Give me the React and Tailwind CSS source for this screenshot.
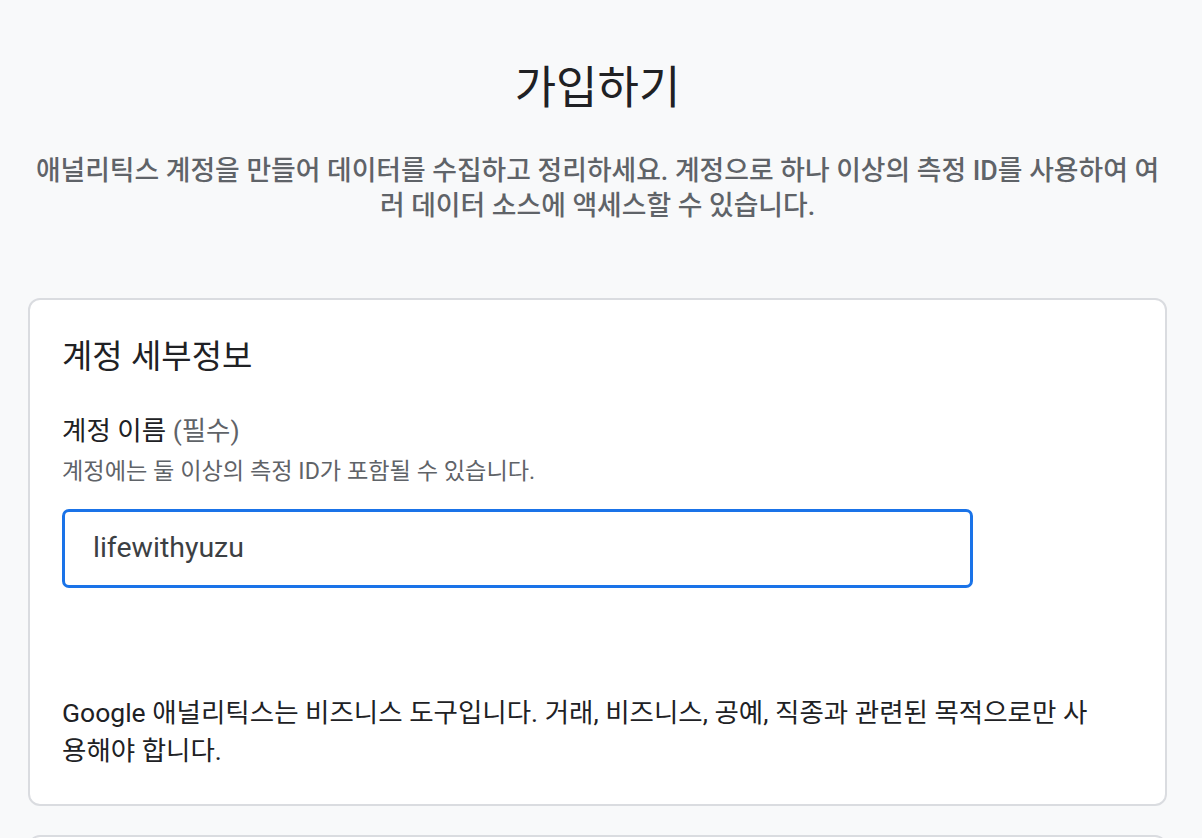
export default function App() {
  return (
    <div className="min-h-[838px] bg-[#f8f9fa] overflow-hidden" style={{ fontFamily: 'Roboto, "Noto Sans CJK KR", sans-serif' }}>
      <div className="pl-[28px] pt-[61px] w-[1167px]">
        <h1 className="text-center text-[45px] leading-[56px] font-normal text-[#202124]">가입하기</h1>
        <p className="mt-[37px] text-center text-[26.8px] leading-[35px] font-medium text-[#5f6368]">
          애널리틱스 계정을 만들어 데이터를 수집하고 정리하세요. 계정으로 하나 이상의 측정 ID를 사용하여 여러 데이터 소스에 액세스할 수 있습니다.
        </p>
        <div className="mt-[74px] bg-white border-2 border-[#dadce0] rounded-[12px] pl-[32px] pr-[64px] pt-[37px] pb-[34px]">
          <h2 className="text-[33px] leading-[40px] font-normal text-[#202124]">계정 세부정보</h2>
          <div className="mt-[38px] text-[26.5px] leading-[32px] text-[#202124]">
            계정 이름 <span className="text-[#5f6368]">(필수)</span>
          </div>
          <div className="mt-[9px] text-[23.2px] leading-[30px] text-[#5f6368]">계정에는 둘 이상의 측정 ID가 포함될 수 있습니다.</div>
          <div className="mt-[23px] w-[911px] h-[79px] border-[3px] border-[#1a73e8] rounded-[7px] flex items-center pl-[28px]">
            <span className="text-[28.5px] text-[#3c4043]">lifewithyuzu</span>
          </div>
          <p className="mt-[106px] text-[26.5px] leading-[38px] text-[#202124]">
            Google 애널리틱스는 비즈니스 도구입니다. 거래, 비즈니스, 공예, 직종과 관련된 목적으로만 사용해야 합니다.
          </p>
        </div>
        <div className="mt-[29px] h-[40px] bg-white border-2 border-[#dadce0] rounded-[12px]" />
      </div>
    </div>
  );
}
